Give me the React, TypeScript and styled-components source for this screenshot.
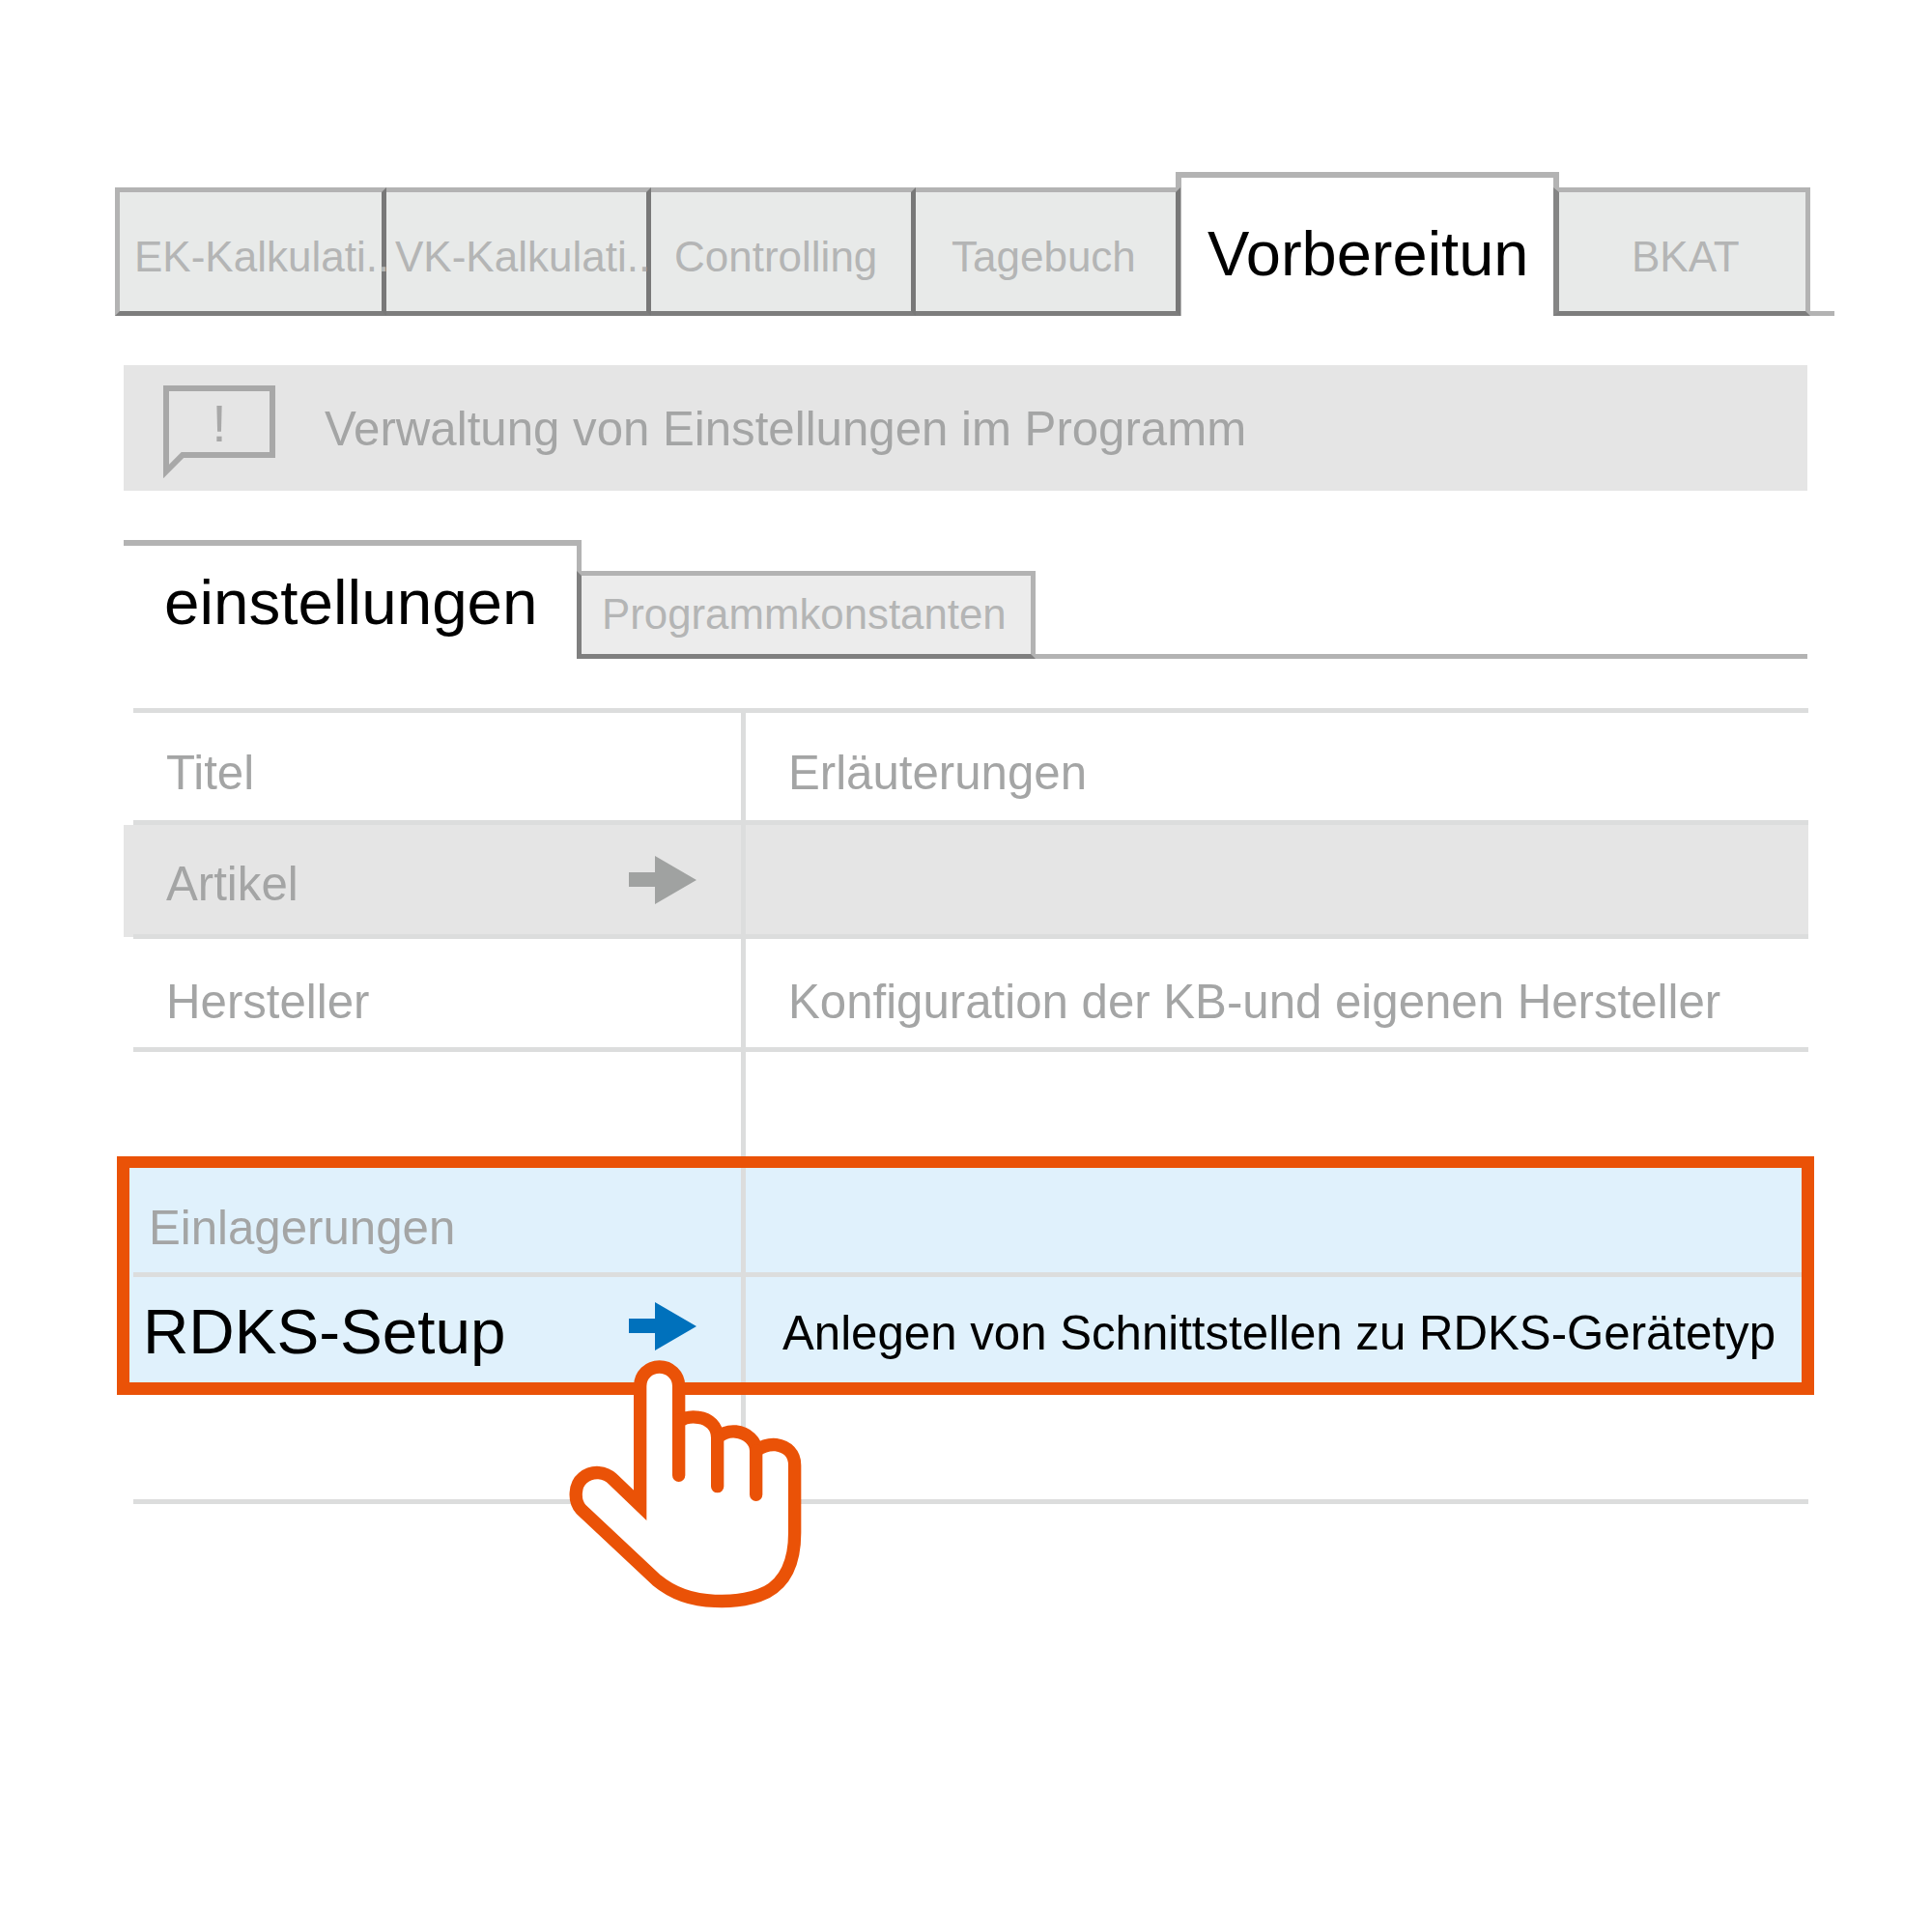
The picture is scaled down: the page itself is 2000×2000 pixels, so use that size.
import React from "react";
import styled, { createGlobalStyle } from "styled-components";

const GlobalStyle = createGlobalStyle`
  * {
    box-sizing: border-box;
  }

  body {
    margin: 0;
    background: #fff;
    font-family: "Liberation Sans", Arial, sans-serif;
  }
`;

const Page = styled.div`
  position: relative;
  width: 2000px;
  height: 2000px;
  padding: 178px 0 0 119px;
  overflow: hidden;
`;

const TabBar = styled.div`
  display: flex;
  align-items: flex-end;
  height: 149px;
`;

const Tab = styled.div<{ $width: number; $pad: number; $first?: boolean; $last?: boolean }>`
  position: relative;
  z-index: 1;
  display: flex;
  align-items: center;
  flex: none;
  width: ${(p) => p.$width}px;
  height: 133px;
  padding: 11px 0 0 ${(p) => p.$pad}px;
  background: #e8eae9;
  border-top: 5px solid #b3b3b3;
  border-bottom: 5px solid #7d7d7d;
  border-right: 5px solid ${(p) => (p.$last ? "#b3b3b3" : "#787878")};
  border-left: ${(p) => (p.$first ? "5px solid #b3b3b3" : "none")};
  color: #b4b5b5;
  font-size: 44px;
  white-space: nowrap;
`;

const LastTab = styled(Tab)`
  margin-left: -6px;
  border-left: 6px solid #858585;
`;

const ActiveTab = styled.div`
  position: relative;
  flex: none;
  display: flex;
  align-items: center;
  width: 397px;
  height: 149px;
  margin-left: -5px;
  padding: 14px 0 0 27px;
  background: #fff;
  border: 6px solid #b3b3b3;
  border-bottom: none;
  color: #000;
  font-size: 65px;
  white-space: nowrap;
`;

const TabTail = styled.div`
  flex: none;
  width: 25px;
  height: 5px;
  background: #b3b3b3;
`;

const Notice = styled.div`
  display: flex;
  align-items: center;
  gap: 51px;
  width: 1743px;
  height: 130px;
  margin: 51px 0 0 9px;
  padding: 0 0 0 41px;
  background: #e5e5e5;
  color: #a4a5a5;
  font-size: 49.2px;
  white-space: nowrap;
`;

const NoticeIcon = styled.svg`
  flex: none;
  margin-top: 8px;
`;

const SubTabBar = styled.div`
  display: flex;
  align-items: flex-end;
  width: 1743px;
  height: 123px;
  margin: 51px 0 0 9px;
`;

const SubTabActive = styled.div`
  flex: none;
  width: 474px;
  height: 123px;
  padding: 21px 0 0 42px;
  border-top: 6px solid #b3b3b3;
  border-right: 5px solid #b3b3b3;
  color: #000;
  font-size: 65.6px;
  white-space: nowrap;
`;

const SubTab = styled.div`
  display: flex;
  align-items: center;
  flex: none;
  width: 475px;
  height: 91px;
  margin-left: -5px;
  padding: 0 0 2px 21px;
  background: #ececec;
  border: 5px solid #b3b3b3;
  border-left-color: #7f7f7f;
  border-bottom-color: #7f7f7f;
  color: #b4b5b5;
  font-size: 43.8px;
  white-space: nowrap;
`;

const SubTabLine = styled.div`
  flex: 1;
  height: 5px;
  background: #b3b3b3;
`;

const Table = styled.div`
  width: 1734px;
  margin: 51px 0 0 19px;
  border-top: 5px solid #dcdddd;
`;

const Row = styled.div<{ $height: number; $shaded?: boolean; $line?: boolean; $inset?: boolean }>`
  position: relative;
  display: grid;
  grid-template-columns: 634px 1fr;
  height: ${(p) => p.$height}px;
  margin-left: ${(p) => (p.$inset ? "4px" : "0")};
  background: ${(p) => (p.$shaded ? "#e5e5e5" : "transparent")};
  border-bottom: ${(p) => (p.$line === false ? "none" : "5px solid #dcdddd")};

  ${(p) =>
    p.$shaded &&
    `
    &::before {
      content: "";
      position: absolute;
      top: 0;
      bottom: -3px;
      left: -10px;
      width: 10px;
      background: #e5e5e5;
    }
  `}
`;

const Cell = styled.div<{ $pad: number; $top: number; $black?: boolean; $size?: number }>`
  display: flex;
  align-items: center;
  padding: ${(p) => p.$top}px 0 0 ${(p) => p.$pad}px;
  color: ${(p) => (p.$black ? "#000" : "#a4a5a5")};
  font-size: ${(p) => p.$size ?? 49.2}px;
  white-space: nowrap;
`;

const TitleCell = styled(Cell)`
  justify-content: space-between;
  padding-right: 46px;
  border-right: 5px solid #dcdddd;
`;

const Arrow = styled.svg<{ $lift?: number }>`
  flex: none;
  margin-top: ${(p) => -(p.$lift ?? 0)}px;
`;

const Highlight = styled.div`
  width: 1757px;
  height: 247px;
  margin-left: -17px;
  background: #e0f1fc;
  border: solid #ea5207;
  border-width: 12px 13px 13px 13px;
`;

const Hand = styled.svg`
  position: absolute;
  left: 560px;
  top: 1380px;
`;

type ArrowProps = { color: string; lift?: number };

const RowArrow = ({ color, lift }: ArrowProps) => (
  <Arrow $lift={lift} width="70" height="50" viewBox="0 0 70 50">
    <path d="M0 17H27V0L70 25L27 50V32H0Z" fill={color} />
  </Arrow>
);

const HAND_OUTLINE =
  "M308 535L308 165C308 130 335 105 368 105C400 105 428 130 428 165L428 275C445 262 465 258 490 262C522 266 548 290 548 325C565 310 585 304 605 306C640 310 668 335 668 365C690 350 710 345 730 347C765 352 788 375 788 410L788 620C788 700 765 770 700 805C650 830 590 834 540 832C460 830 405 805 360 768L125 548C100 520 105 470 130 450C160 425 200 430 225 455Z";

const App = () => (
  <Page>
    <GlobalStyle />
    <TabBar>
      <Tab $width={281} $pad={15} $first>EK-Kalkulati..</Tab>
      <Tab $width={274} $pad={9}>VK-Kalkulati..</Tab>
      <Tab $width={274} $pad={24}>Controlling</Tab>
      <Tab $width={274} $pad={37}>Tagebuch</Tab>
      <ActiveTab>Vorbereitun</ActiveTab>
      <LastTab $width={266} $pad={75} $last>BKAT</LastTab>
      <TabTail />
    </TabBar>

    <Notice>
      <NoticeIcon width="116" height="96" viewBox="0 0 116 96">
        <path d="M3 89V3H113V72H20Z" fill="none" stroke="#a8a8a8" strokeWidth="6" />
        <text x="58" y="58" textAnchor="middle" fontSize="54" fill="#a8a8a8">!</text>
      </NoticeIcon>
      Verwaltung von Einstellungen im Programm
    </Notice>

    <SubTabBar>
      <SubTabActive>einstellungen</SubTabActive>
      <SubTab>Programmkonstanten</SubTab>
      <SubTabLine />
    </SubTabBar>

    <Table>
      <Row $height={116}>
        <TitleCell $pad={34} $top={12}>Titel</TitleCell>
        <Cell $pad={44} $top={12}>Erläuterungen</Cell>
      </Row>
      <Row $height={118} $shaded>
        <TitleCell $pad={34} $top={8}>
          Artikel
          <RowArrow color="#a0a2a1" lift={8} />
        </TitleCell>
        <Cell $pad={44} $top={8} />
      </Row>
      <Row $height={117}>
        <TitleCell $pad={34} $top={16}>Hersteller</TitleCell>
        <Cell $pad={44} $top={16}>Konfiguration der KB-und eigenen Hersteller</Cell>
      </Row>
      <Row $height={108} $line={false}>
        <TitleCell $pad={34} $top={0} />
        <Cell $pad={44} $top={0} />
      </Row>
      <Highlight>
        <Row $height={113} $inset>
          <TitleCell $pad={16} $top={15}>Einlagerungen</TitleCell>
          <Cell $pad={40} $top={15} />
        </Row>
        <Row $height={109} $inset $line={false}>
          <TitleCell $pad={10} $top={4} $black $size={65.6}>
            RDKS-Setup
            <RowArrow color="#0071bc" lift={12} />
          </TitleCell>
          <Cell $pad={38} $top={5} $black>Anlegen von Schnittstellen zu RDKS-Gerätetyp</Cell>
        </Row>
      </Highlight>
      <Row $height={113}>
        <TitleCell $pad={34} $top={0} />
        <Cell $pad={44} $top={0} />
      </Row>
    </Table>

    <Hand width="300" height="300" viewBox="0 0 900 900">
      <path d={HAND_OUTLINE} fill="#fff" stroke="#ea5207" strokeWidth="40" strokeLinejoin="miter" strokeMiterlimit="6" />
      <path d="M428 270V442M548 325V476M668 365V502" fill="none" stroke="#ea5207" strokeWidth="40" strokeLinecap="round" />
    </Hand>
  </Page>
);

export default App;
